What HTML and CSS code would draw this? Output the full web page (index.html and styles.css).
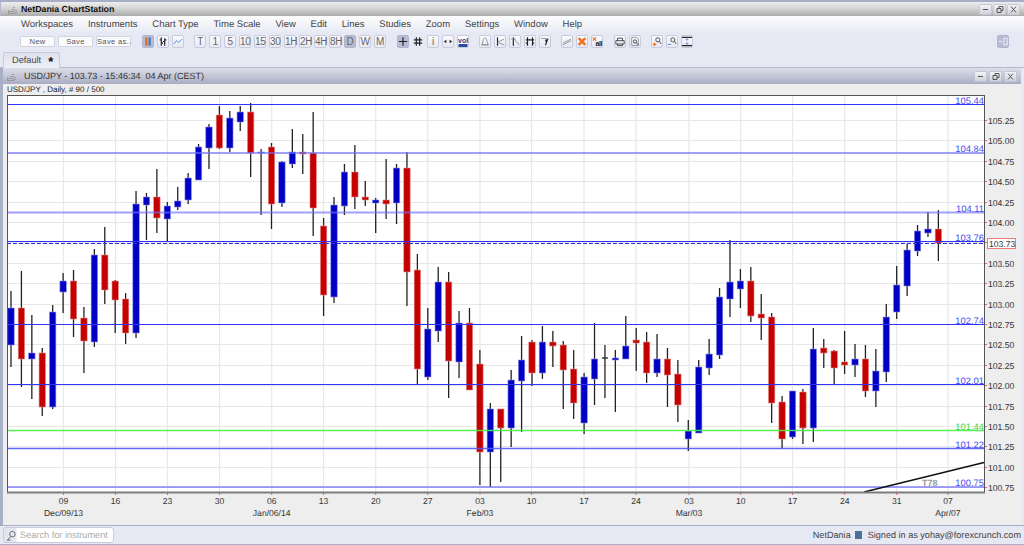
FILE: index.html
```html
<!DOCTYPE html>
<html lang="en">
<head>
  <meta charset="UTF-8" />
  <title>NetDania ChartStation</title>
  <link rel="stylesheet" href="styles.css">
</head>
<body>
  <div class="app">
    <div class="titlebar">
      <svg class="logo" viewBox="0 0 9 9"><path d="M0 8h1M2 6v3M4 4v5M6 2v7M8 5v4M0 6h1" /></svg>
      <span class="app-title">NetDania ChartStation</span>
      <div class="win-btns">
        <span class="win-btn"><svg viewBox="0 0 11 9"><path d="M3 4.5h5" /></svg></span>
        <span class="win-btn"><svg viewBox="0 0 11 9"><path d="M3 3.5h4v4h-4zM5 3.5v-2h4v4h-2" /></svg></span>
        <span class="win-btn"><svg viewBox="0 0 11 9"><path d="M3 1.5l5 6M8 1.5l-5 6" /></svg></span>
      </div>
    </div>

    <div class="menubar">
      <span>Workspaces</span><span>Instruments</span><span>Chart Type</span><span>Time Scale</span>
      <span>View</span><span>Edit</span><span>Lines</span><span>Studies</span><span>Zoom</span>
      <span>Settings</span><span>Window</span><span>Help</span>
    </div>

    <div class="toolbar">
      <div class="tb-group files">
        <button class="file-btn">New</button>
        <button class="file-btn">Save</button>
        <button class="file-btn">Save as..</button>
      </div>
      <div class="tb-group g-type">
        <button class="tb on"><svg viewBox="0 0 12 12"><path class="s-org" d="M4 1v10" /><path class="s-blu" d="M8 1v10" /></svg></button>
        <button class="tb"><svg viewBox="0 0 12 12"><path class="s-blk" d="M4 1v10M2 4h2M4 8h2M8 2v9M6 6h2M8 4h2" /></svg></button>
        <button class="tb"><svg viewBox="0 0 12 12"><path class="s-thin-blu" d="M1 9l3-4 3 2 4-4" /></svg></button>
      </div>
      <div class="tb-group g-time">
        <button class="tb">T</button><button class="tb">1</button><button class="tb">5</button>
        <button class="tb">10</button><button class="tb">15</button><button class="tb">30</button>
        <button class="tb">1H</button><button class="tb">2H</button><button class="tb">4H</button>
        <button class="tb">8H</button><button class="tb on">D</button><button class="tb">W</button>
        <button class="tb">M</button>
      </div>
      <div class="tb-group g-view">
        <button class="tb on"><svg viewBox="0 0 12 12"><path class="s-blk" d="M6 1v10M1 6h10" /></svg></button>
        <button class="tb flat"><svg viewBox="0 0 12 12"><path class="s-blk" d="M4 1v10M8 1v10M1 4h10M1 8h10" /></svg></button>
        <button class="tb">i</button>
        <button class="tb"><svg viewBox="0 0 12 12"><path class="s-fill" d="M1 6l3-2v4zM11 6l-3-2v4z" /></svg></button>
        <button class="tb vol">vol<svg viewBox="0 0 12 4"><path class="s-fill-blu" d="M0 0h12v4h-12z" /></svg></button>
      </div>
      <div class="tb-group g-lines">
        <button class="tb"><svg viewBox="0 0 12 12"><path class="s-grey" d="M2 10c1-1 1-3 2-6 1-3 3-3 4 0 1 3 1 5 2 6zM2 10h8" /></svg></button>
        <button class="tb"><svg viewBox="0 0 12 12"><path class="s-blk" d="M3 1v10" /><path class="s-grey" d="M3 7l8-4M3 7l8 3" /></svg></button>
        <button class="tb"><svg viewBox="0 0 12 12"><path class="s-blk" d="M4 1v10" /><path class="s-grey" d="M4 2l7 8M1 3h6" /></svg></button>
        <button class="tb"><svg viewBox="0 0 12 12"><path class="s-blk" d="M3 1v10M9 1v10M1 4h10M3 8h-2M9 8h2" /></svg></button>
        <button class="tb"><svg viewBox="0 0 12 12"><path class="s-grey" d="M1 2l10 1" /><path class="s-fill" d="M6 4l4-1-3 8-1-1 1-3z" /></svg></button>
      </div>
      <div class="tb-group g-clear">
        <button class="tb"><svg viewBox="0 0 12 12"><path class="s-grey" d="M1 8l10-5M1 10l10-5" /></svg></button>
        <button class="tb"><svg viewBox="0 0 12 12"><path class="s-x" d="M2 2l8 8M10 2l-8 8" /></svg></button>
        <button class="tb all"><svg viewBox="0 0 12 12"><path class="s-x-small" d="M1 1l4 4M5 1l-4 4" /></svg><span>all</span></button>
      </div>
      <div class="tb-group g-print">
        <button class="tb"><svg viewBox="0 0 12 12"><path class="s-blk-thin" d="M3 5v-3h6v3M1 5h10v4h-10zM3 9v2h6v-2" /></svg></button>
        <button class="tb"><svg viewBox="0 0 12 12"><path class="s-grey" d="M2 1h6l2 2v8h-8z" /><circle class="s-blk-thin" cx="6" cy="6" r="2" /><path class="s-blk-thin" d="M7.5 7.5l3 3" /></svg></button>
      </div>
      <div class="tb-group g-zoom">
        <button class="tb"><svg viewBox="0 0 12 12"><circle class="s-blk-thin" cx="7" cy="4" r="2.5" /><path class="s-blk-thin" d="M9 6l2 3" /><path class="s-x-small" d="M1 9.5h4M3 7.5v4" /></svg></button>
        <button class="tb"><svg viewBox="0 0 12 12"><circle class="s-blk-thin" cx="7" cy="4" r="2.5" /><path class="s-blk-thin" d="M9 6l2 3" /><path class="s-thin-blu" d="M1 9.5h4" /></svg></button>
        <button class="tb"><svg viewBox="0 0 12 12"><path class="s-blk" d="M0 1h12M0 11h12" /><path class="s-thin-blu" d="M6 3v2M6 7v2M4.5 4l1.5-1.5 1.5 1.5M4.5 8l1.5 1.5 1.5-1.5" /></svg></button>
      </div>
      <button class="tb on corner"><svg viewBox="0 0 12 12"><path class="s-white" d="M1 6h4M7 2h4v8h-4z" /></svg></button>
    </div>

    <div class="tabrow">
      <div class="tab">Default<span class="tab-star">*</span></div>
    </div>

    <div class="window">
      <div class="win-title">
        <svg class="logo" viewBox="0 0 9 9"><path d="M0 8h1M2 6v3M4 4v5M6 2v7M8 5v4M0 6h1" /></svg>
        <span>USD/JPY - 103.73 - 15:46:34&nbsp; 04 Apr (CEST)</span>
        <div class="win-btns">
          <span class="win-btn"><svg viewBox="0 0 11 9"><path d="M3 4.5h5" /></svg></span>
          <span class="win-btn"><svg viewBox="0 0 11 9"><path d="M3 3.5h4v4h-4zM5 3.5v-2h4v4h-2" /></svg></span>
          <span class="win-btn"><svg viewBox="0 0 11 9"><path d="M3 1.5l5 6M8 1.5l-5 6" /></svg></span>
        </div>
      </div>
      <div class="chart-info">USD/JPY , Daily, # 90 / 500</div>
      <svg id="chart" class="chart" viewBox="3 95 1018 430" width="1018" height="430"></svg>
    </div>

    <div class="statusbar">
      <div class="search">
        <svg viewBox="0 0 12 12"><circle cx="7" cy="4.5" r="3" /><path d="M5 7l-3 4M1 11h4" /></svg>
        <span>Search for instrument</span>
      </div>
      <div class="status-right">
        <span>NetDania</span>
        <i class="status-box"></i>
        <span>Signed in as yohay@forexcrunch.com</span>
      </div>
    </div>
  </div>
  <script src="chart.js"></script>
</body>
</html>
```

FILE: styles.css
```css
* {
  box-sizing: border-box;
}
body {
  margin: 0;
  font-family: "Liberation Sans", Arial, sans-serif;
  font-size: 10px;
  color: #333;
  background: #e6e8f4;
  overflow: hidden;
  text-rendering: geometricPrecision;
  white-space: nowrap;
}
svg path, svg circle {
  fill: none;
}
.app {
  width: 1024px;
  height: 545px;
  display: flex;
  flex-direction: column;
  border-top: 2px solid #a9aec8;
}

/* title bars */
.titlebar {
  height: 14px;
  display: flex;
  align-items: center;
  padding-left: 7px;
  border-left: 1px solid #b4b9d0;
  background: linear-gradient(#ededed, #d8d8d8 40%, #ababab);
}
.logo {
  width: 9px;
  height: 9px;
  flex: none;
}
.logo path {
  stroke: #777;
  stroke-width: 1;
  stroke-dasharray: 1 1;
}
.app-title {
  margin-left: 4px;
  font-size: 8.8px;
  font-weight: bold;
  color: #111;
}
.win-btns {
  margin-left: auto;
  display: flex;
  gap: 3px;
  padding-right: 5px;
}
.win-btn {
  width: 11px;
  height: 9px;
  display: block;
  background: linear-gradient(#f4f4f6, #d0d2dc);
  border-radius: 1px;
  box-shadow: 0 0 0 1px #c4c6d2;
}
.win-btn svg {
  display: block;
  width: 11px;
  height: 9px;
}
.win-btn path {
  stroke: #555;
  stroke-width: 1;
}

/* menu */
.menubar {
  height: 17px;
  display: flex;
  align-items: center;
  gap: 14.8px;
  padding-left: 21px;
  background: linear-gradient(#fdfdfe, #eef0f8 70%, #e6e8f4);
  font-size: 9.5px;
  color: #444;
}

/* toolbar */
.toolbar {
  height: 18px;
  display: flex;
  align-items: flex-start;
  padding-top: 2px;
  background: #e6e8f4;
}
.tb-group {
  display: flex;
  gap: 3px;
}
.files {
  margin-left: 20px;
  gap: 3px;
}
.file-btn {
  width: 35px;
  height: 11px;
  margin-top: 1px;
  padding: 0;
  border: 1px solid #d2d4e0;
  border-radius: 1px;
  background: #fbfbfd;
  font: 7.6px "Liberation Sans", sans-serif;
  letter-spacing: 0.3px;
  white-space: nowrap;
  color: #555;
}
.tb {
  width: 12px;
  height: 13px;
  padding: 0;
  border: 1px solid #c8cbdd;
  border-radius: 2px;
  background: linear-gradient(#fbfbfe, #e6e8f3);
  font: 10px "Liberation Sans", sans-serif;
  letter-spacing: -0.4px;
  color: #666;
  overflow: visible;
  position: relative;
}
.tb svg {
  display: block;
  width: 10px;
  height: 11px;
}
.tb.on {
  background: #b9bdd3;
  border-color: #b0b4cc;
}
.tb.flat {
  background: none;
  border-color: transparent;
}
.tb.vol {
  font-size: 7px;
  font-weight: bold;
  line-height: 7px;
  color: #223a8c;
  letter-spacing: 0;
  background: #fff;
}
.tb.vol svg {
  height: 3px;
}
.tb.all span {
  position: absolute;
  right: 0;
  bottom: 0;
  font-size: 7px;
  line-height: 7px;
  font-weight: bold;
  color: #222;
}
.g-type { margin-left: 11px; }
.g-time { margin-left: 10px; }
.g-view { margin-left: 11px; }
.g-lines { margin-left: 10px; }
.g-clear { margin-left: 10px; }
.g-print { margin-left: 11px; }
.g-zoom { margin-left: 10px; }
.corner { margin-left: auto; margin-right: 15px; }
.s-org { stroke: #e8701a; stroke-width: 3; }
.s-blu { stroke: #4a7fc0; stroke-width: 3; }
.s-blk { stroke: #222; stroke-width: 1.4; }
.s-blk-thin { stroke: #333; stroke-width: 1; }
.s-thin-blu { stroke: #4a78c8; stroke-width: 1; }
.s-grey { stroke: #888; stroke-width: 1; }
.s-white { stroke: #eee; stroke-width: 1.2; }
.s-x { stroke: #f0701a; stroke-width: 3; }
.s-x-small { stroke: #f0701a; stroke-width: 1.4; }
svg path.s-fill { fill: #222; }
svg path.s-fill-blu { fill: #2a4ca0; }

/* tabs */
.tabrow {
  height: 17px;
  padding: 1px 0 0 3px;
  border-bottom: 1px solid #b4b9d0;
  background: #e6e8f4;
}
.tab {
  width: 57px;
  height: 16px;
  padding: 1px 0 0 8px;
  border: 1px solid #c8cbdd;
  border-bottom: none;
  border-radius: 2px 2px 0 0;
  background: linear-gradient(#dfe1ee, #eceef7);
  font-size: 9.2px;
  line-height: 13px;
  color: #444;
  display: flex;
}
.tab-star {
  margin-left: 7px;
  font-weight: bold;
  font-size: 13px;
  line-height: 16px;
  color: #111;
}

/* chart window */
.window {
  width: 1021px;
  height: 457px;
  border-left: 3px solid #a8b0c8;
  background: #eee;
  flex: none;
}
.win-title {
  height: 16px;
  display: flex;
  align-items: center;
  padding-left: 4px;
  background: linear-gradient(#dcdee8, #bfc2d4 60%, #a9acc2);
  font-size: 9px;
  color: #333;
}
.win-title .logo {
  margin-right: 8px;
}
.win-title .win-btns {
  padding-right: 5px;
  gap: 4px;
}
.chart-info {
  height: 11px;
  padding-left: 4px;
  font-size: 8px;
  line-height: 11px;
  color: #222;
}
.chart {
  display: block;
}
.plot { fill: #fff; }
.grid { stroke: #e6e6e6; stroke-width: 1.2; }
.vgrid { stroke: #e8e8e8; stroke-width: 1.2; }
.tick { stroke: #e06a6a; stroke-width: 1; }
.axis { stroke: #555; stroke-width: 1; fill: none; }
.axis-b { stroke: #7d7d7d; stroke-width: 2; }
.wick { stroke: #222; stroke-width: 1.3; }
.up { fill: #0000c4; stroke: #8a8ae6; stroke-width: 0.6; }
.down { fill: #c40000; stroke: #e88a8a; stroke-width: 0.6; }
.hl { stroke: rgb(50, 50, 255); stroke-width: 1.1; }
.hl-wide { stroke: rgba(110, 110, 250, 0.65); stroke-width: 2; }
.hl-mid { stroke: rgba(80, 90, 250, 0.9); stroke-width: 1.4; }
.hl-green { stroke: rgba(70, 240, 70, 0.9); stroke-width: 1.4; }
.hl-dash { stroke: #3030e0; stroke-width: 1; stroke-dasharray: 4 2; }
.trend { stroke: #111; stroke-width: 1.4; }
.t-price { font-size: 8.6px; fill: #333; }
.t-date { font-size: 8.6px; fill: #333; text-anchor: middle; }
.t-level { font-size: 9.4px; fill: #4a4af0; text-anchor: end; }
.t-level.green { fill: #3fd83f; }
.t-trend { font-size: 9px; fill: #999; font-weight: bold; }
.last-box { fill: #fff; stroke: #ee7a7a; stroke-width: 1; }

/* status bar */
.statusbar {
  height: 20px;
  flex: none;
  display: flex;
  align-items: center;
  padding-left: 3px;
  border-top: 1px solid #a9aec8;
  border-bottom: 1px solid #a9aec8;
  background: #e6e8f4;
}
.search {
  width: 111px;
  height: 16px;
  display: flex;
  align-items: center;
  gap: 3px;
  padding-left: 2px;
  border: 1px solid #c8cbdd;
  border-radius: 3px;
  background: linear-gradient(90deg, #e4e5ee 12px, #fff 13px);
  font-size: 9.2px;
  color: #aaa;
}
.search svg {
  width: 11px;
  height: 11px;
  flex: none;
}
.search path, .search circle {
  stroke: #666;
  stroke-width: 1;
}
.status-right {
  margin-left: auto;
  display: flex;
  align-items: center;
  gap: 4px;
  padding-right: 3px;
  font-size: 9.1px;
  color: #444;
}
.status-box {
  width: 7px;
  height: 8px;
  margin-right: 2px;
  background: #4a7299;
}
```

FILE: chart.js
```js
const svg = document.getElementById("chart");

// wick top, wick bottom, body top, body bottom, up (blue) or down (red), in page pixels
const candles = [
  [291, 367, 308, 345, 1], [271, 387, 308, 359, 0], [315, 399, 353, 359, 1], [348, 416, 353, 407, 0],
  [305, 409, 312, 407, 1], [273, 313, 281, 292, 1], [270, 337, 281, 319, 0], [307, 373, 318, 341, 0],
  [249, 347, 255, 342, 1], [227, 304, 255, 290, 0], [280, 333, 281, 300, 0], [293, 344, 299, 333, 0],
  [191, 338, 204, 333, 1], [193, 240, 197, 205, 1], [169, 233, 197, 218, 0], [202, 241, 206, 219, 1],
  [187, 210, 201, 207, 1], [173, 204, 178, 200, 1], [144, 180, 147, 180, 1], [124, 169, 127, 148, 1],
  [106, 149, 115, 148, 0], [111, 152, 118, 148, 1], [106, 131, 112, 122, 1], [103, 177, 112, 153, 0],
  [149, 215, 152, 153, 1], [143, 229, 147, 204, 0], [161, 207, 162, 203, 1], [129, 168, 152, 164, 1],
  [134, 174, 152, 154, 0], [112, 236, 153, 208, 0], [218, 316, 226, 295, 0], [197, 303, 205, 297, 1],
  [164, 215, 172, 206, 1], [145, 209, 172, 197, 0], [181, 206, 197, 200, 0], [198, 233, 200, 203, 1],
  [159, 219, 200, 204, 0], [164, 224, 168, 203, 1], [152, 306, 168, 272, 0], [254, 385, 270, 369, 0],
  [308, 380, 329, 377, 1], [267, 342, 282, 331, 1], [272, 398, 282, 361, 0], [311, 378, 323, 362, 1],
  [308, 390, 323, 390, 0], [350, 485, 364, 452, 0], [403, 487, 409, 452, 1], [409, 482, 409, 428, 0],
  [370, 447, 380, 428, 1], [336, 432, 360, 381, 1], [340, 386, 342, 373, 0], [326, 379, 342, 373, 1],
  [331, 367, 342, 346, 0], [341, 409, 345, 370, 0], [350, 419, 369, 403, 0], [373, 434, 377, 423, 1],
  [323, 405, 359, 379, 1], [345, 398, 358, 359, 2], [350, 412, 358, 360, 1], [316, 359, 346, 359, 1],
  [328, 371, 340, 343, 0], [332, 383, 342, 373, 0], [334, 377, 359, 373, 1], [348, 407, 359, 375, 0],
  [360, 422, 374, 405, 0], [420, 451, 431, 439, 1], [360, 433, 367, 433, 1], [339, 375, 354, 368, 1],
  [288, 359, 297, 355, 1], [240, 317, 282, 299, 1], [269, 308, 281, 289, 1], [267, 322, 281, 316, 0],
  [294, 340, 314, 318, 0], [313, 423, 317, 403, 0], [396, 449, 402, 439, 0], [391, 439, 391, 437, 1],
  [389, 444, 392, 428, 0], [328, 442, 349, 428, 1], [339, 368, 348, 353, 0], [350, 384, 351, 368, 0],
  [331, 374, 362, 365, 0], [344, 377, 359, 365, 1], [345, 397, 359, 391, 0], [349, 407, 371, 391, 1],
  [304, 382, 317, 372, 1], [266, 319, 285, 312, 1], [244, 296, 250, 286, 1], [225, 256, 231, 251, 1],
  [212, 237, 229, 233, 1], [210, 261, 229, 243, 0]
];

const gridX = [63.5, 115.5, 167.5, 219.5, 271.7, 323.5, 375.7, 427.7, 480, 531.5, 584, 636, 689, 740.7, 792.5, 844.7, 896.7, 948];
const dayLabels = ["09", "16", "23", "30", "06", "13", "20", "27", "03", "10", "17", "24", "03", "10", "17", "24", "31", "07"];
const monthLabels = { 0: "Dec/09/13", 4: "Jan/06/14", 8: "Feb/03", 12: "Mar/03", 17: "Apr/07" };

const levels = [
  [105.44, 104.5, "hl"], [104.84, 153, "hl-wide"], [104.11, 212.5, "hl-wide"], [103.76, 241.5, "hl"],
  [102.74, 324.5, "hl"], [102.01, 384.5, "hl"], [101.44, 430.5, "hl-green"], [101.22, 448.5, "hl-mid"],
  [100.75, 487, "hl-wide"]
];

function add(tag, attrs, text) {
  const el = document.createElementNS("http://www.w3.org/2000/svg", tag);
  for (const key in attrs) el.setAttribute(key, attrs[key]);
  if (text) el.textContent = text;
  svg.appendChild(el);
  return el;
}

function line(x1, y1, x2, y2, cls) {
  return add("line", { x1, y1, x2, y2, class: cls });
}

function priceY(price) {
  return 120 + (105.25 - price) * 81.6;
}

add("rect", { x: 7, y: 95, width: 977, height: 397, class: "plot" });

// grid
for (let p = 100.75; p <= 105.25; p += 0.25) {
  const y = Math.round(priceY(p)) + 0.5;
  line(7, y, 984, y, "grid");
  line(984, y, 987, y, "tick");
  add("text", { x: 988, y: y + 3, class: "t-price" }, p.toFixed(2));
}
gridX.forEach((x, i) => {
  line(x, 95, x, 492, "vgrid");
  line(x, 492, x, 495, "tick");
  add("text", { x, y: 504, class: "t-date" }, dayLabels[i]);
  if (monthLabels[i]) add("text", { x, y: 515.5, class: "t-date" }, monthLabels[i]);
});

// candles
candles.forEach((c, i) => {
  const x = 11 + i * 10.42;
  line(x, c[0], x, c[1], "wick");
  if (c[4] === 2) {
    line(x - 3, c[2], x + 3, c[2], "wick");
    return;
  }
  add("rect", {
    x: x - 3.2,
    y: c[2],
    width: 6.4,
    height: Math.max(c[3] - c[2], 1),
    class: c[4] ? "up" : "down"
  });
});

// support and resistance lines
levels.forEach(([price, y, cls]) => {
  line(7, y, 984, y, cls);
  const labelCls = cls === "hl-green" ? "t-level green" : "t-level";
  add("text", { x: 984, y: y - 1, class: labelCls }, price.toFixed(2));
});
line(7, 243.5, 984, 243.5, "hl-dash");

// trend line
line(864, 492, 984, 462.5, "trend");
add("text", { x: 922, y: 486, class: "t-trend" }, "T78");

// frame
line(7, 95.5, 984.5, 95.5, "axis");
line(7.5, 95, 7.5, 493, "axis");
line(984.5, 95, 984.5, 493, "axis");
line(7, 492.5, 985, 492.5, "axis-b");

// last price
add("rect", { x: 987.5, y: 238.5, width: 28, height: 10, class: "last-box" });
add("text", { x: 989, y: 246.5, class: "t-price" }, "103.73");
```
